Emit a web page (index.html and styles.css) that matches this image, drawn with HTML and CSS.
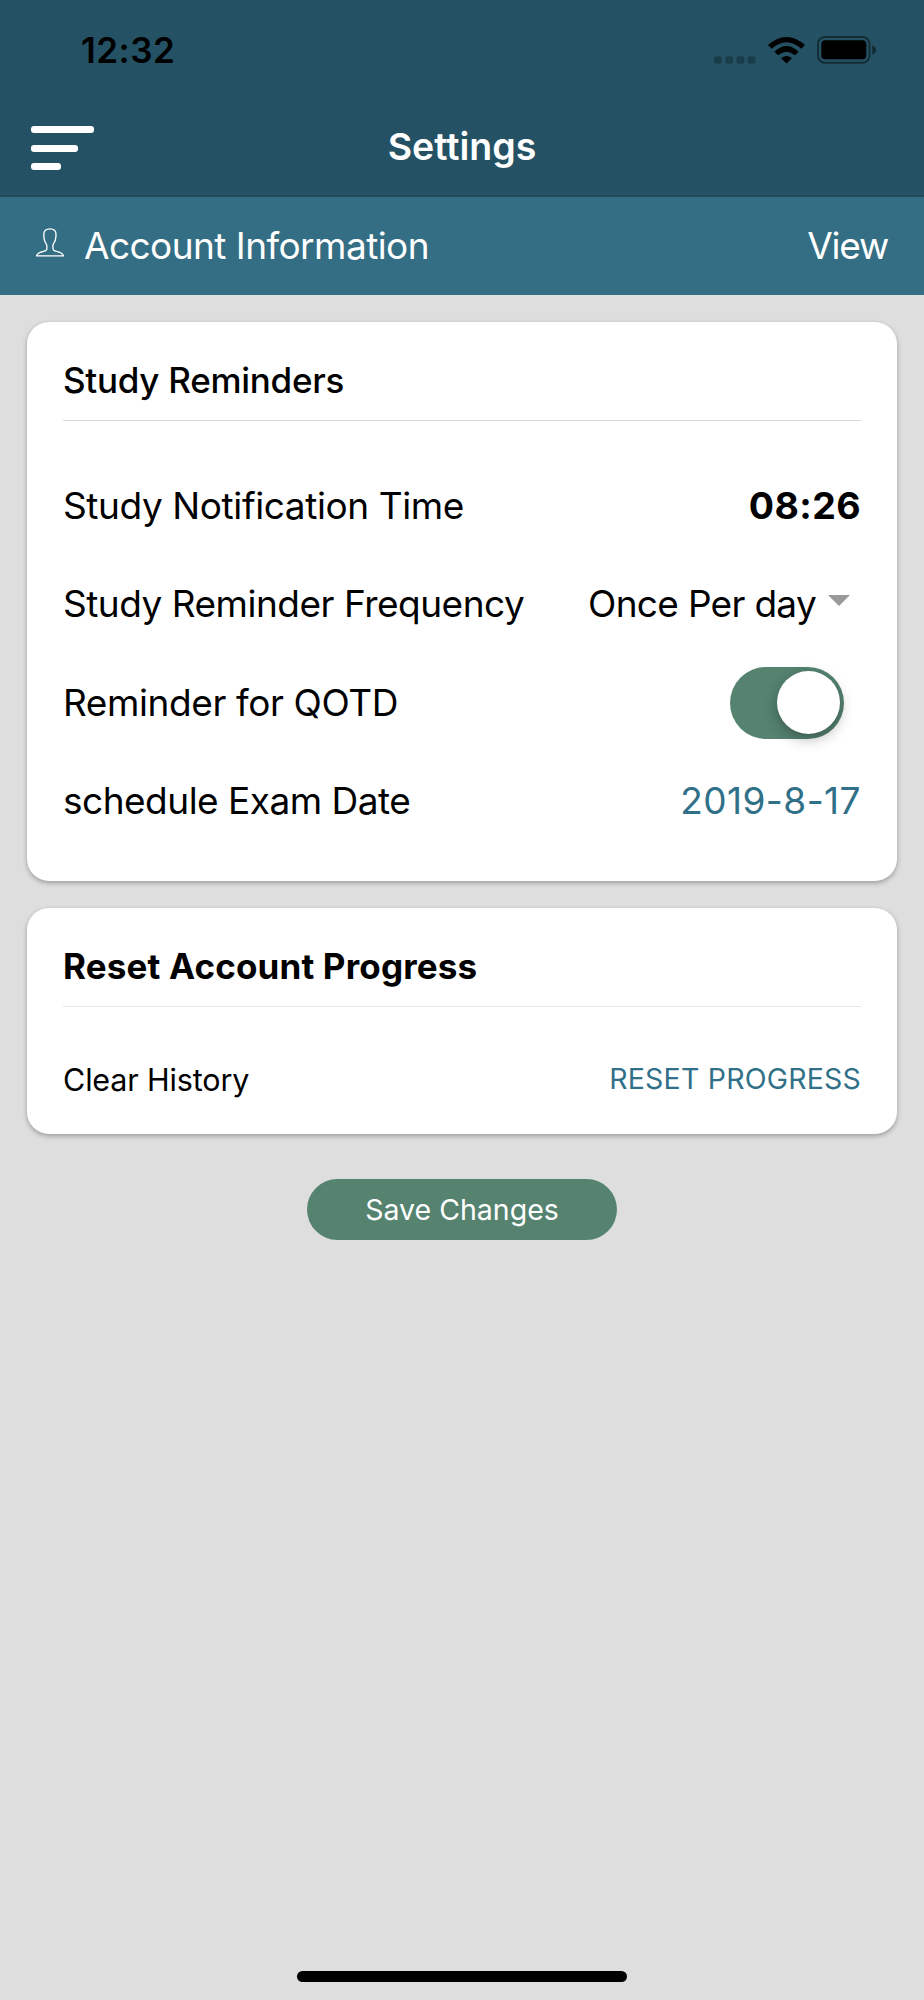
FILE: index.html
```html
<!DOCTYPE html>
<html lang="en">
<head>
    <meta charset="UTF-8">
    <meta name="viewport" content="width=device-width, initial-scale=1.0">
    <title>Settings</title>
    <link rel="stylesheet" href="styles.css">
</head>
<body>
    <header class="header">
        <div class="status-bar">
            <span class="clock">12:32</span>
            <div class="status-icons">
                <svg class="signal" viewBox="0 0 42 8">
                    <rect x="0" y="0.3" width="8" height="7.4" rx="2.5"/>
                    <rect x="11.2" y="0.3" width="8" height="7.4" rx="2.5"/>
                    <rect x="22.4" y="0.3" width="8" height="7.4" rx="2.5"/>
                    <rect x="33.6" y="0.3" width="8" height="7.4" rx="2.5"/>
                </svg>
                <svg class="wifi" viewBox="0 0 110 80">
                    <path d="M0 24 Q55 -24 110 24 L99 35 Q55 -4 11 35 Z"/>
                    <path d="M19 44 Q55 9 91 44 L80 54 Q55 33 30 54 Z"/>
                    <path d="M39 63 Q55 50 71 63 L55 79 Z"/>
                </svg>
                <svg class="battery" viewBox="0 0 60 28">
                    <rect class="battery-shell" x="1" y="1" width="51.5" height="25.8" rx="7"/>
                    <rect x="4.3" y="4.3" width="45" height="19" rx="3.8"/>
                    <path class="battery-cap" d="M55.3 9.3 Q59 11 59 13.9 Q59 17 55.3 18.5 Z"/>
                </svg>
            </div>
        </div>
        <div class="nav-bar">
            <div class="menu">
                <span class="line long"></span>
                <span class="line medium"></span>
                <span class="line short"></span>
            </div>
            <h1>Settings</h1>
        </div>
    </header>

    <div class="account-bar">
        <svg class="person" viewBox="0 0 84 86">
            <path d="M42 2 C30 2 23 8 23.500 20 C23.500 27 24 30 25 35 C26 42 31 44 32 51 C33 57 34 62 31 66 C26 72 4 69 2 83 L82 83 C80 69 58 72 53 66 C50 62 50 57 51 51 C52 44 57 42 58 35 C59 30 60 27 60 20 C60.500 8 54 2 42 2 Z"/>
        </svg>
        <span class="account-label">Account Information</span>
        <a class="view">View</a>
    </div>

    <main>
        <section class="card reminders">
            <h2>Study Reminders</h2>
            <div class="row">
                <span class="label-time">Study Notification Time</span>
                <span class="time">08:26</span>
            </div>
            <div class="row">
                <span class="label-frequency">Study Reminder Frequency</span>
                <div class="select">
                    <span class="frequency">Once Per day</span>
                    <span class="arrow"></span>
                </div>
            </div>
            <div class="row">
                <span class="label-qotd">Reminder for QOTD</span>
                <div class="toggle"><span class="thumb"></span></div>
            </div>
            <div class="row">
                <span class="label-date">schedule Exam Date</span>
                <a class="date">2019-8-17</a>
            </div>
        </section>

        <section class="card reset">
            <h2 class="reset-title">Reset Account Progress</h2>
            <div class="row">
                <span class="clear">Clear History</span>
                <a class="reset-link">RESET PROGRESS</a>
            </div>
        </section>

        <button class="save">Save Changes</button>
    </main>

    <div class="home-indicator"></div>
</body>
</html>
```
FILE: styles.css
```css
* {
    box-sizing: border-box;
}

body {
    margin: 0;
    height: 2000px;
    display: flex;
    flex-direction: column;
    font-family: Inter, "Liberation Sans", sans-serif;
    font-size: 37px;
    line-height: 46px;
    color: #000;
    background-color: #dedede;
}

.header {
    height: 197px;
    background-color: #245264;
    border-bottom: 2px solid #23495a;
}

.status-bar {
    height: 98px;
    padding: 2px 47px 0 81px;
    display: flex;
    justify-content: space-between;
    align-items: center;
}

.clock {
    font-size: 35px;
    font-weight: 600;
    letter-spacing: 0.5px;
}

.status-icons {
    display: flex;
    align-items: flex-end;
}

.signal {
    width: 42px;
    height: 8px;
    margin-right: 12px;
    opacity: 0.25;
}

.wifi {
    width: 37px;
    height: 27px;
    margin-right: 12px;
}

.battery {
    width: 60px;
    height: 28px;
}

.battery-shell {
    fill: none;
    stroke: #000;
    stroke-width: 2;
    stroke-opacity: 0.45;
}

.battery-cap {
    fill-opacity: 0.5;
}

.nav-bar {
    height: 97px;
    display: grid;
    grid-template-columns: 1fr auto 1fr;
    align-items: center;
    padding: 0 31px;
}

.menu {
    display: flex;
    flex-direction: column;
    gap: 11.5px;
    margin-top: 3px;
}

.line {
    height: 7px;
    border-radius: 3px;
    background-color: #fff;
}

.long {
    width: 63px;
}

.medium {
    width: 47px;
}

.short {
    width: 30px;
}

h1 {
    margin: 0;
    color: #fff;
    font-size: 37.5px;
    font-weight: 600;
}

.account-bar {
    height: 98px;
    padding: 0 36px;
    display: flex;
    align-items: center;
    color: #fff;
    background-color: #346e84;
}

.person {
    width: 28px;
    height: 29px;
    margin: 0 20px 7px 0;
    fill: none;
    stroke: #fff;
    stroke-width: 4;
}

.account-label {
    letter-spacing: -0.56px;
}

.view {
    margin-left: auto;
    letter-spacing: -1.2px;
}

main {
    flex: 1;
    display: flex;
    flex-direction: column;
    align-items: center;
    padding: 27px;
}

.card {
    width: 870px;
    padding: 36px;
    background-color: #fff;
    border-radius: 22px;
    box-shadow: 0 2px 5px rgba(0, 0, 0, 0.3);
}

.reminders {
    height: 559px;
    margin-bottom: 27px;
}

.reset {
    height: 226px;
    margin-bottom: 45px;
}

h2 {
    height: 63px;
    margin: 0 0 36px;
    font-size: 35px;
    font-weight: 500;
    line-height: 44px;
    letter-spacing: -0.28px;
    border-bottom: 1px solid #d9d9d9;
}

.row {
    height: 98.3px;
    display: flex;
    justify-content: space-between;
    align-items: center;
}

.label-time,
.label-qotd {
    letter-spacing: -0.4px;
}

.label-frequency,
.label-date {
    letter-spacing: -0.5px;
}

.time {
    font-size: 37.5px;
    font-weight: 700;
    letter-spacing: 0.4px;
}

.select {
    display: flex;
    align-items: center;
}

.frequency {
    letter-spacing: -0.7px;
}

.arrow {
    margin: 0 11px 8px 12px;
    border-left: 11px solid transparent;
    border-right: 11px solid transparent;
    border-top: 11px solid #999;
}

.toggle {
    width: 114px;
    height: 72px;
    margin-right: 17px;
    padding: 4.5px;
    display: flex;
    justify-content: flex-end;
    border-radius: 36px;
    background-color: #558370;
}

.thumb {
    width: 63px;
    height: 63px;
    border-radius: 50%;
    background-color: #fff;
    box-shadow: 0 5px 14px rgba(0, 0, 0, 0.3);
}

.date,
.reset-link {
    color: #307088;
}

.date {
    letter-spacing: 0.45px;
}

.reset-title {
    margin-bottom: 24px;
    font-weight: 700;
    letter-spacing: 0.16px;
    border-color: #e6e6e6;
}

.clear {
    font-size: 30.5px;
    letter-spacing: -0.15px;
}

.reset-link {
    margin-bottom: 2px;
    font-size: 28.5px;
    letter-spacing: 0.2px;
}

.save {
    width: 310px;
    height: 61px;
    padding: 0;
    border: none;
    border-radius: 31px;
    color: #fff;
    background-color: #558370;
    font-family: inherit;
    font-size: 28.5px;
}

.home-indicator {
    width: 330px;
    height: 11px;
    margin: 0 auto 18px;
    border-radius: 6px;
    background-color: #000;
}
```
